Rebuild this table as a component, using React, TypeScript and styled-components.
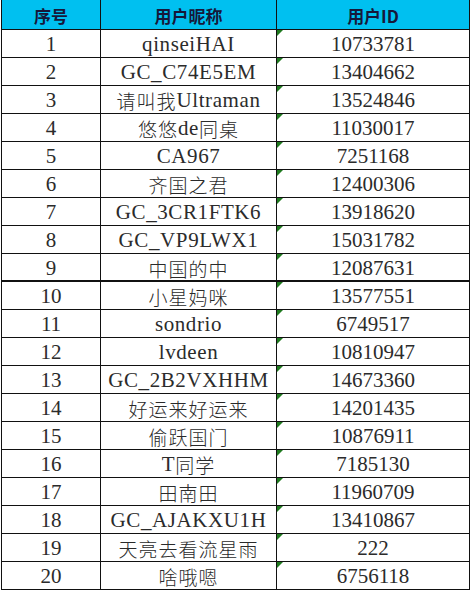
import React from "react";
import styled, { createGlobalStyle } from "styled-components";

const Global = createGlobalStyle`
  html, body { margin: 0; padding: 0; background: #ffffff; }
  body { font-family: "Liberation Serif", "Noto Sans CJK SC", serif; }
`;

const Sheet = styled.div`
  margin-left: 1px;
  width: 469px;
  display: grid;
  grid-template-columns: 99px 176px 193px;
  border-left: 1px solid #111;
  box-sizing: border-box;
`;

const HeadCell = styled.div`
  height: 30px;
  box-sizing: border-box;
  background: #00c0f0;
  border-right: 1px solid #111;
  border-bottom: 1px solid #111;
  display: flex;
  align-items: center;
  justify-content: center;
  font-family: "Noto Sans CJK SC", "Noto Sans", sans-serif;
  font-weight: 700;
  font-size: 17px;
  color: #16183a;
  padding-top: 1px;
`;

const Cell = styled.div<{ $thick?: boolean; $spaced?: boolean }>`
  position: relative;
  height: 28px;
  box-sizing: border-box;
  border-right: 1px solid #111;
  border-bottom: ${(p) => (p.$thick ? "2px" : "1px")} solid #111;
  display: flex;
  align-items: center;
  justify-content: center;
  font-family: "Liberation Serif", "Noto Sans CJK SC", serif;
  font-size: 21px;
  letter-spacing: ${(p) => (p.$spaced ? "0.6px" : "0")};
  color: #2b2b2b;
  white-space: nowrap;
  padding-top: 2px;
`;

const Flag = styled.span`
  position: absolute;
  left: 0;
  top: 0;
  width: 0;
  height: 0;
  border-top: 6px solid #1f7a1f;
  border-right: 6px solid transparent;
`;

const Han = styled.span`
  font-family: "Noto Sans CJK SC", sans-serif;
  font-size: 19px;
  font-weight: 300;
  letter-spacing: 1px;
  color: #2a2a2a;
`;

const rows: [string, string][] = [
  ["qinseiHAI", "10733781"],
  ["GC_C74E5EM", "13404662"],
  ["请叫我Ultraman", "13524846"],
  ["悠悠de同桌", "11030017"],
  ["CA967", "7251168"],
  ["齐国之君", "12400306"],
  ["GC_3CR1FTK6", "13918620"],
  ["GC_VP9LWX1", "15031782"],
  ["中国的中", "12087631"],
  ["小星妈咪", "13577551"],
  ["sondrio", "6749517"],
  ["lvdeen", "10810947"],
  ["GC_2B2VXHHM", "14673360"],
  ["好运来好运来", "14201435"],
  ["偷跃国门", "10876911"],
  ["T同学", "7185130"],
  ["田南田", "11960709"],
  ["GC_AJAKXU1H", "13410867"],
  ["天亮去看流星雨", "222"],
  ["啥哦嗯", "6756118"],
];

function renderMixed(text: string) {
  const parts = text.split(/([\u4e00-\u9fff]+)/).filter(Boolean);
  return parts.map((p, i) =>
    /[\u4e00-\u9fff]/.test(p) ? <Han key={i}>{p}</Han> : <React.Fragment key={i}>{p}</React.Fragment>
  );
}

export default function App() {
  return (
    <>
      <Global />
      <Sheet>
        <HeadCell>序号</HeadCell>
        <HeadCell>用户昵称</HeadCell>
        <HeadCell>用户ID</HeadCell>
        {rows.map(([name, id], i) => {
          const thick = i === 8;
          return (
            <React.Fragment key={i}>
              <Cell $thick={thick}>{i + 1}</Cell>
              <Cell $thick={thick} $spaced>{renderMixed(name)}</Cell>
              <Cell $thick={thick}>
                <Flag />
                {id}
              </Cell>
            </React.Fragment>
          );
        })}
      </Sheet>
    </>
  );
}
